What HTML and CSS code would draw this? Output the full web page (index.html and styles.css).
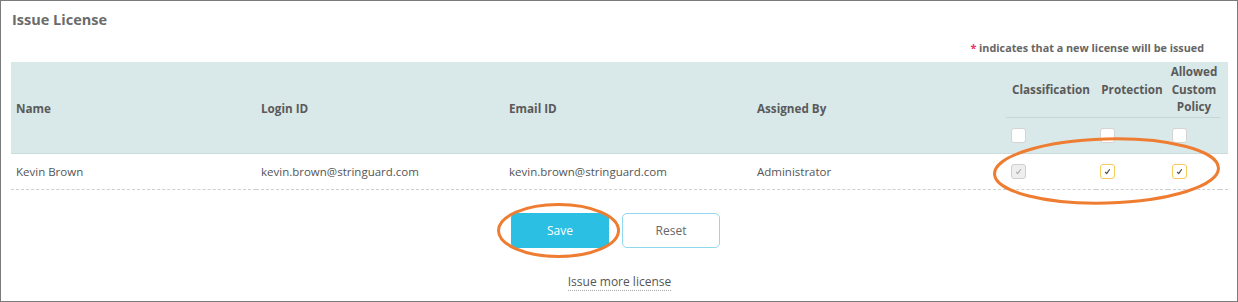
FILE: index.html
```html
<!DOCTYPE html>
<html lang="en">
<head>
  <meta charset="UTF-8" />
  <meta name="viewport" content="width=device-width, initial-scale=1.0">
  <title>Issue License</title>
  <link rel="stylesheet" href="styles.css">
</head>
<body>
  <div class="panel">
    <h2 class="title">Issue License</h2>
    <p class="note"><span class="star">*</span> indicates that a new license will be issued</p>

    <table class="licenses">
      <colgroup>
        <col class="c-name">
        <col class="c-login">
        <col class="c-email">
        <col class="c-assigned">
        <col class="c-class">
        <col class="c-prot">
        <col class="c-custom">
        <col class="c-pad">
      </colgroup>
      <thead>
        <tr class="head-top">
          <th rowspan="2">Name</th>
          <th rowspan="2">Login ID</th>
          <th rowspan="2">Email ID</th>
          <th rowspan="2">Assigned By</th>
          <th class="perm">Classification</th>
          <th class="perm">Protection</th>
          <th class="perm">Allowed Custom Policy</th>
          <th rowspan="2"></th>
        </tr>
        <tr class="head-boxes">
          <th class="box-cell first"><span class="box"></span></th>
          <th class="box-cell"><span class="box"></span></th>
          <th class="box-cell"><span class="box"></span></th>
        </tr>
      </thead>
      <tbody>
        <tr>
          <td>Kevin Brown</td>
          <td>kevin.brown@stringuard.com</td>
          <td>kevin.brown@stringuard.com</td>
          <td>Administrator</td>
          <td class="box-cell first">
            <span class="box disabled"><svg viewBox="0 0 14 14"><path d="M4.5 7.4 L6.2 9.3 L9.4 4.6" /></svg></span>
          </td>
          <td class="box-cell">
            <span class="box marked"><svg viewBox="0 0 14 14"><path d="M4.5 7.4 L6.2 9.3 L9.4 4.6" /></svg></span>
          </td>
          <td class="box-cell">
            <span class="box marked"><svg viewBox="0 0 14 14"><path d="M4.5 7.4 L6.2 9.3 L9.4 4.6" /></svg></span>
          </td>
          <td></td>
        </tr>
      </tbody>
    </table>

    <div class="actions">
      <button class="btn save">Save</button>
      <button class="btn reset">Reset</button>
    </div>

    <div class="more">
      <a href="#" class="more-link">Issue more license</a>
    </div>

    <!-- markierungen -->
    <svg class="marks" width="1238" height="302" viewBox="0 0 1238 302">
      <ellipse cx="558.5" cy="230.5" rx="60" ry="26" />
      <ellipse cx="1106.5" cy="171" rx="112" ry="32" transform="rotate(-1.5 1106.5 171)" />
    </svg>
  </div>
</body>
</html>
```

FILE: styles.css
```css
body {
  margin: 0;
  font-family: "Open Sans", "Liberation Sans", sans-serif;
  background: white;
}

.panel {
  position: relative;
  width: 1238px;
  height: 302px;
  box-sizing: border-box;
  border: 1px solid #7b7b7b;
  padding: 9px 9px 0 10px;
}

.title {
  margin: 0;
  padding-left: 1px;
  font-size: 14.5px;
  line-height: 20px;
  font-weight: bold;
  color: #6b6b6b;
}

.note {
  margin: 10px 0 0;
  padding-right: 24px;
  text-align: right;
  font-size: 10.8px;
  line-height: 16px;
  font-weight: bold;
  color: #666;
}

.star {
  color: #e8336d;
}

.licenses {
  margin-top: 6px;
  width: 1217px;
  border-collapse: collapse;
  border-spacing: 0;
  table-layout: fixed;
  font-size: 11.5px;
  color: #555;
}

.c-name { width: 245px; }
.c-login { width: 248px; }
.c-email { width: 248px; }
.c-assigned { width: 254px; }
.c-class { width: 90px; }
.c-prot { width: 72px; }
.c-custom { width: 52px; }
.c-pad { width: 8px; }

thead {
  background: #d9e8e8;
  border-bottom: 1px solid #cbdcdc;
}

th {
  text-align: left;
  font-size: 11.7px;
  font-weight: bold;
  color: #5a5a5a;
  padding: 0 5px;
  vertical-align: middle;
}

.head-top th {
  height: 55px;
  padding-top: 0;
  padding-bottom: 0;
}

.head-top th.perm {
  text-align: center;
  line-height: 17.5px;
  padding: 0;
  border-bottom: 1px solid #c6d6d6;
}

.head-boxes th {
  height: 35px;
}

td {
  height: 35px;
  padding: 0 5px;
  border-bottom: 1px dashed #cfcfcf;
  white-space: nowrap;
}

.box-cell {
  padding: 0 4px;
  line-height: 0;
}

.box-cell.first {
  padding-left: 5px;
}

.box {
  display: inline-block;
  width: 13px;
  height: 13px;
  border: 1px solid #d4d4d4;
  border-radius: 3px;
  background: white;
  vertical-align: middle;
}

.box svg {
  display: block;
  width: 13px;
  height: 13px;
}

.box path {
  fill: none;
  stroke: #444;
  stroke-width: 1.2;
}

.box.disabled {
  background: #eeeeee;
  border-color: #cfcfcf;
}

.box.disabled path {
  stroke: #aaa;
}

.box.marked {
  border-color: #f6cd5a;
}

.actions {
  display: flex;
  justify-content: center;
  gap: 13px;
  margin-top: 23px;
  padding-right: 8px;
}

.btn {
  width: 98px;
  height: 35px;
  border-radius: 5px;
  font-family: inherit;
  font-size: 12px;
  cursor: pointer;
}

.save {
  background: #2bbfe4;
  border: 1px solid #2bbfe4;
  color: white;
}

.reset {
  background: white;
  border: 1px solid #8fd8ee;
  color: #666;
}

.more {
  margin-top: 26px;
  text-align: center;
  font-size: 12px;
  line-height: 16px;
}

.more-link {
  color: #555;
  text-decoration: none;
  border-bottom: 1px dotted #aaa;
}

.marks {
  position: absolute;
  top: -1px;
  left: -1px;
  pointer-events: none;
}

.marks ellipse {
  fill: none;
  stroke: #ee7d31;
  stroke-width: 3;
}
```
